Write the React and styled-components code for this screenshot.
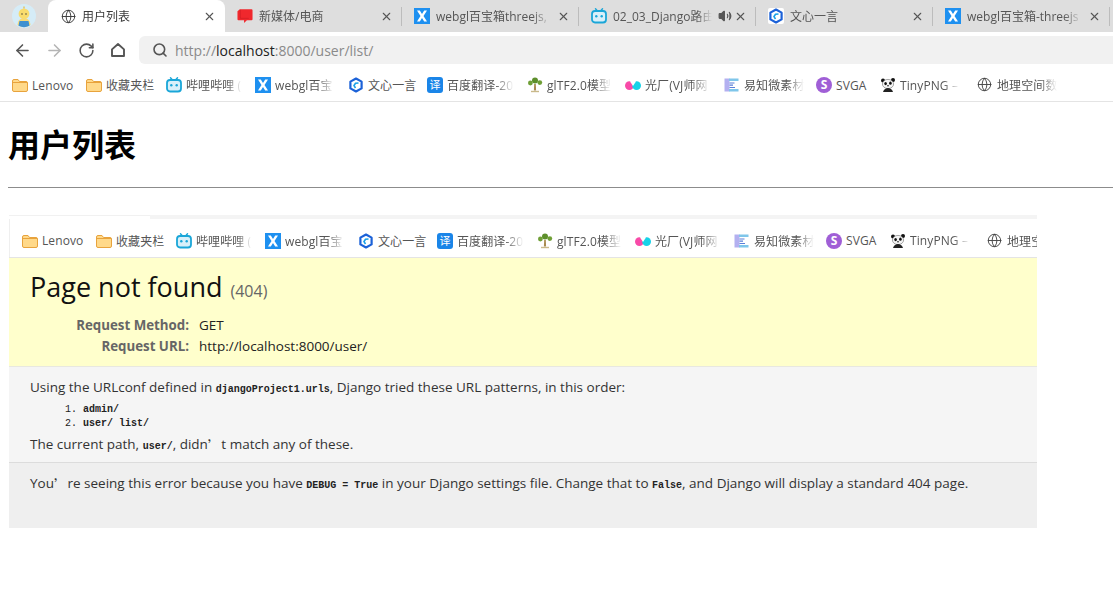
import React from "react";
import styled, { createGlobalStyle } from "styled-components";
import { ArrowLeft, ArrowRight, RotateCw, Search, X, Globe, Volume2 } from "lucide-react";

const GlobalStyle = createGlobalStyle`
  html, body {
    margin: 0;
    background: #fff;
    font-family: "Open Sans", "Noto Sans CJK SC", sans-serif;
    overflow: hidden;
  }
`;

const TabBar = styled.div`
  display: flex;
  height: 32px;
  background: #dedede;
`;

const AvatarSlot = styled.div`
  width: 48px;
  padding: 4px 0 0 12px;
  box-sizing: border-box;
`;

const Tab = styled.div`
  position: relative;
  box-sizing: border-box;
  width: 177px;
  padding: 0 9px 0 12px;
  display: flex;
  align-items: center;
  gap: 6px;
  font-size: 12px;
  color: ${(p) => (p.$active ? "#3a3a3a" : "#555")};
  background: ${(p) => (p.$active ? "#fff" : "transparent")};
  border-radius: 8px 8px 0 0;

  &::after {
    content: "";
    display: ${(p) => (p.$sep ? "block" : "none")};
    position: absolute;
    right: 0;
    top: 7px;
    height: 19px;
    width: 1px;
    background: #bcbcbc;
  }
`;

const TabIcon = styled.span`
  flex: none;
  width: 16px;
  height: 16px;
  display: flex;
  justify-content: center;
  align-items: center;
`;

const TabTitle = styled.span`
  flex: 1;
  min-width: 0;
  overflow: hidden;
  white-space: nowrap;
  mask-image: linear-gradient(to right, #000 84%, transparent 100%);
`;

const TabAction = styled.span`
  flex: none;
  display: flex;
  color: #555;
  margin-left: ${(p) => p.$gap || 0}px;
`;

const Toolbar = styled.div`
  display: flex;
  height: 32px;
  background: #fff;
  padding-top: 4px;
  box-sizing: border-box;
`;

const NavButtons = styled.div`
  width: 139px;
  flex: none;
  display: flex;
  align-items: center;
  padding-left: 6px;
  box-sizing: border-box;
`;

const NavButton = styled.span`
  width: 32px;
  display: flex;
  justify-content: center;
  color: ${(p) => (p.$off ? "#b5b5b5" : "#555")};
`;

const SearchIcon = styled.span`
  display: flex;
  color: #555;
`;

const AddressBar = styled.div`
  flex: 1;
  background: #f1f1f1;
  border-radius: 6px 0 0 6px;
  display: flex;
  align-items: center;
  gap: 7px;
  padding-left: 13px;
  font-size: 14px;
  color: #8a8a8a;
`;

const Host = styled.span`
  color: #222;
`;

const Bookmarks = styled.div`
  display: flex;
  align-items: center;
  box-sizing: border-box;
  height: ${(p) => p.$height}px;
  padding: 5px 0 0 ${(p) => p.$left}px;
  border-bottom: 1px solid #e4e4e4;
  background: #fff;
  box-shadow: ${(p) => (p.$framed ? "inset 1px 0 0 #efefef" : "none")};
  overflow: hidden;
  white-space: nowrap;
`;

const Bookmark = styled.div`
  flex: none;
  width: ${(p) => p.$w}px;
  display: flex;
  align-items: center;
  gap: 4px;
  font-size: 12px;
  letter-spacing: 0.1px;
  color: #555;
`;

const BookmarkIcon = styled.span`
  flex: none;
  width: 16px;
  height: 16px;
  display: flex;
  color: #444;
`;

const BookmarkLabel = styled.span`
  width: ${(p) => p.$w}px;
  overflow: hidden;
  mask-image: ${(p) => (p.$fade ? "linear-gradient(to right, #000 72%, transparent 100%)" : "none")};
`;

const Heading = styled.h1`
  margin: 0;
  padding: 19px 0 0 8px;
  font-family: "Noto Sans CJK SC", sans-serif;
  font-size: 32px;
  line-height: 44px;
  font-weight: 700;
  color: #000;
`;

const Rule = styled.hr`
  margin: 22px 0 27px 8px;
  border: 0;
  height: 1px;
  background: #8c8c8c;
`;

const Shot = styled.div`
  margin-left: 9px;
  width: 1028px;
  overflow: hidden;
`;

const ShotEdge = styled.div`
  height: 4px;
  background:
    linear-gradient(#f1f1f1, #f1f1f1) left top / 141px 1px no-repeat,
    linear-gradient(#f4f4f4, #f4f4f4) right top / calc(100% - 141px) 100% no-repeat;
`;

const ErrorHead = styled.div`
  box-sizing: border-box;
  height: 109px;
  padding: 9px 21px 0;
  background: #ffffcc;
  border-bottom: 1px solid #e8e8e0;
  color: #000;
`;

const ErrorTitle = styled.h2`
  margin: 0 0 4px;
  font-size: 27px;
  line-height: 40px;
  font-weight: 400;
  color: #111;
`;

const StatusCode = styled.span`
  font-size: 16px;
  color: #666;
  margin-left: 1px;
`;

const MetaTable = styled.div`
  display: grid;
  grid-template-columns: 180px auto;
  column-gap: 10px;
  justify-content: start;
  margin-left: -21px;
  font-size: 13.3px;
  line-height: 21px;
`;

const MetaKey = styled.span`
  text-align: right;
  font-weight: 700;
  color: #666;
`;

const MetaValue = styled.span`
  font-size: 13.5px;
  color: #222;
`;

const InfoBlock = styled.div`
  box-sizing: border-box;
  height: 96px;
  padding: 10px 21px 0;
  background: #f5f5f5;
  border-bottom: 1px solid #dcdcdc;
  font-size: 13.5px;
  color: #333;
`;

const ExplainBlock = styled.div`
  box-sizing: border-box;
  height: 65px;
  padding: 10px 21px 0;
  background: #efefef;
  font-size: 13.5px;
  color: #333;
`;

const Line = styled.p`
  margin: 0;
  line-height: 20px;
`;

const Code = styled.code`
  font-family: "Liberation Mono", monospace;
  font-size: 10px;
  font-weight: 700;
  color: #222;
`;

const Quote = styled.span`
  font-family: "Noto Sans CJK SC", sans-serif;
  vertical-align: -2px;
`;

const Patterns = styled.ol`
  margin: 3px 0 3px;
  padding-left: 53px;
  font-family: "Liberation Mono", monospace;
  font-size: 10px;
  font-weight: 700;
  line-height: 14px;
  color: #222;

  li::marker {
    font-weight: 400;
  }
`;

const Folder = () => (
  <svg width="16" height="16" viewBox="0 0 16 16">
    <path d="M.5 4a1.500 1.500 0 0 1 1.500-1.500h4l1.500 2H14A1.500 1.500 0 0 1 15.500 6v7a1.500 1.500 0 0 1-1.500 1.500H2A1.500 1.500 0 0 1 .5 13z" fill="#ffd98a" stroke="#e8a33d" />
    <path d="M1 5.500h14" stroke="#e8a33d" />
  </svg>
);

const Bilibili = () => (
  <svg width="16" height="16" viewBox="0 0 16 16">
    <path d="M4.500 .8 6.500 3M11.500 .8 9.500 3" stroke="#1aa6d8" strokeWidth="1.400" strokeLinecap="round" />
    <rect x="1" y="3" width="14" height="11.500" rx="3" fill="#d8f0fa" stroke="#1aa6d8" strokeWidth="1.800" />
    <circle cx="5.300" cy="8.200" r="1.200" fill="#1aa6d8" />
    <circle cx="10.700" cy="8.200" r="1.200" fill="#1aa6d8" />
  </svg>
);

const XLogo = () => (
  <svg width="16" height="16" viewBox="0 0 16 16">
    <rect width="16" height="16" fill="#1e90f0" />
    <path d="M3 2.500h2.800L8 6l2.200-3.500H13L9.500 8 13 13.500h-2.800L8 10l-2.200 3.500H3L6.500 8z" fill="#fff" />
  </svg>
);

const Wenxin = () => (
  <svg width="16" height="16" viewBox="0 0 16 16">
    <rect width="16" height="16" rx="2" fill="#fff" />
    <path d="M8 1.500 13.600 4.600v6.800L8 14.500 2.400 11.400V4.600z" fill="#fff" stroke="#1c62d8" strokeWidth="2.200" strokeLinejoin="round" />
    <path d="M10.500 6 7.500 6.300 6 8.600 7.500 11" fill="none" stroke="#18a0e8" strokeWidth="1.600" />
  </svg>
);

const Translate = styled.span`
  width: 16px;
  height: 16px;
  border-radius: 3px;
  background: #1a85e8;
  color: #fff;
  font-size: 11px;
  line-height: 16px;
  text-align: center;
`;

const Tree = () => (
  <svg width="16" height="16" viewBox="0 0 16 16">
    <path d="M7.200 7h1.600l.3 6.500H6.900z" fill="#a88a4f" />
    <path d="M4 14.500h8" stroke="#c9b98a" strokeWidth="1.400" />
    <circle cx="8" cy="3.400" r="3" fill="#5d8f2c" />
    <circle cx="3.400" cy="6" r="2.400" fill="#6f9f36" />
    <circle cx="12.800" cy="5.600" r="2.400" fill="#6f9f36" />
  </svg>
);

const Guangchang = () => (
  <svg width="16" height="16" viewBox="0 0 16 16">
    <circle cx="4.400" cy="8.600" r="4.400" fill="#f84aa8" />
    <circle cx="11.600" cy="8.600" r="4.400" fill="#16d2e8" />
    <path d="M5 4.600c2-1.600 4-1.600 6 0L8 9z" fill="#fff" />
  </svg>
);

const Yizhi = () => (
  <svg width="16" height="16" viewBox="0 0 16 16">
    <rect x=".5" y="1.500" width="5" height="13" fill="#b3b0f0" />
    <path d="M5 1.500h9.500v2.400H5zM5 12h9.500v2.500H5z" fill="#7fc6ea" />
    <path d="M5.500 6h5M5.500 8.200h3.500M5.500 10.500h5.500" stroke="#5b7fd8" strokeWidth="1.200" />
  </svg>
);

const Svga = styled.span`
  width: 16px;
  height: 16px;
  border-radius: 50%;
  background: #a05fd6;
  color: #fff;
  font-size: 12px;
  font-weight: 700;
  line-height: 16px;
  text-align: center;
`;

const Panda = () => (
  <svg width="16" height="16" viewBox="0 0 16 16">
    <circle cx="3" cy="3.600" r="2" fill="#111" />
    <circle cx="13" cy="3" r="2" fill="#111" />
    <ellipse cx="8" cy="7" rx="5.600" ry="4.600" fill="#f4f4f4" stroke="#555" strokeWidth=".5" />
    <ellipse cx="5.600" cy="6.600" rx="1.300" ry="1.600" fill="#111" />
    <ellipse cx="10.400" cy="6.200" rx="1.300" ry="1.600" fill="#111" />
    <circle cx="8" cy="8.800" r=".8" fill="#111" />
    <path d="M3 15c1-3 3-4 5-4s4 1 5 4z" fill="#222" />
  </svg>
);

const Speech = () => (
  <svg width="17" height="16" viewBox="0 0 17 16">
    <path d="M.5 3 3 .8h12.500a1 1 0 0 1 1 1v9.700a1 1 0 0 1-1 1h-5L7.500 15.500v-3H1.500a1 1 0 0 1-1-1z" fill="#f0282d" />
    <path d="M3.500 1.500v9h9" fill="none" stroke="#c81a20" strokeOpacity=".6" />
  </svg>
);

const HomeIcon = () => (
  <svg width="16" height="16" viewBox="0 0 16 16" fill="none" stroke="currentColor" strokeWidth="1.900" strokeLinejoin="round">
    <path d="M2 7.400 8 2l6 5.400V14H2z" />
  </svg>
);

const Avatar = () => (
  <svg width="24" height="24" viewBox="0 0 24 24">
    <circle cx="12" cy="12" r="12" fill="#d5ecf7" />
    <path d="M5.500 21c.5-5 3-7 6.500-7s6 2 6.500 7a12 12 0 0 1-13 0z" fill="#f7d978" />
    <circle cx="12" cy="9.800" r="5.400" fill="#f9dc6d" />
    <path d="M7.500 17h9l1 4.800a12 12 0 0 1-11 0z" fill="#3d8fd0" />
    <circle cx="10" cy="10" r=".7" fill="#333" />
    <circle cx="14" cy="10" r=".7" fill="#333" />
    <path d="M12 4.500V2.500" stroke="#e8b93f" strokeWidth="1.200" />
  </svg>
);

const tabs = [
  { title: "用户列表", icon: <Globe size={15} strokeWidth={1.5} />, active: true },
  { title: "新媒体/电商", icon: <Speech />, sep: true },
  { title: "webgl百宝箱threejs,", icon: <XLogo />, sep: true },
  { title: "02_03_Django路由", icon: <Bilibili />, sound: true, sep: true },
  { title: "文心一言", icon: <Wenxin />, sep: true },
  { title: "webgl百宝箱-threejs", icon: <XLogo />, sep: true },
];

const bookmarks = [
  { w: 74, lw: 42, label: "Lenovo", icon: <Folder /> },
  { w: 80, lw: 49, label: "收藏夹栏", icon: <Folder /> },
  { w: 89, lw: 56, label: "哔哩哔哩 (", icon: <Bilibili />, fade: true },
  { w: 93, lw: 59, label: "webgl百宝", icon: <XLogo />, fade: true },
  { w: 79, lw: 49, label: "文心一言", icon: <Wenxin /> },
  { w: 100, lw: 67, label: "百度翻译-20", icon: <Translate>译</Translate>, fade: true },
  { w: 98, lw: 65, label: "glTF2.0模型", icon: <Tree />, fade: true },
  { w: 99, lw: 65, label: "光厂(VJ师网", icon: <Guangchang />, fade: true },
  { w: 92, lw: 60, label: "易知微素材", icon: <Yizhi />, fade: true },
  { w: 64, lw: 33, label: "SVGA", icon: <Svga>S</Svga> },
  { w: 97, lw: 60, label: "TinyPNG –", icon: <Panda />, fade: true },
  { w: 100, lw: 60, label: "地理空间数", icon: <Globe size={15} strokeWidth={1.5} />, fade: true },
];

function BookmarkRow({ height, left, framed }) {
  return (
    <Bookmarks $height={height} $left={left} $framed={framed}>
      {bookmarks.map((b) => (
        <Bookmark key={b.label} $w={b.w}>
          <BookmarkIcon>{b.icon}</BookmarkIcon>
          <BookmarkLabel $w={b.lw} $fade={b.fade}>{b.label}</BookmarkLabel>
        </Bookmark>
      ))}
    </Bookmarks>
  );
}

export default function App() {
  return (
    <>
      <GlobalStyle />
      <TabBar>
        <AvatarSlot>
          <Avatar />
        </AvatarSlot>
        {tabs.map((t) => (
          <Tab key={t.title} $active={t.active} $sep={t.sep}>
            <TabIcon>{t.icon}</TabIcon>
            <TabTitle>{t.title}</TabTitle>
            {t.sound && (
              <TabAction>
                <Volume2 size={14} fill="#555" />
              </TabAction>
            )}
            <TabAction $gap={t.sound ? -4 : 0}>
              <X size={13} strokeWidth={2} />
            </TabAction>
          </Tab>
        ))}
      </TabBar>
      <Toolbar>
        <NavButtons>
          <NavButton><ArrowLeft size={19} strokeWidth={2} /></NavButton>
          <NavButton $off><ArrowRight size={19} strokeWidth={2} /></NavButton>
          <NavButton><RotateCw size={17} strokeWidth={2.2} /></NavButton>
          <NavButton><HomeIcon /></NavButton>
        </NavButtons>
        <AddressBar>
          <SearchIcon><Search size={16} strokeWidth={2.4} /></SearchIcon>
          <span>http://<Host>localhost</Host>:8000/user/list/</span>
        </AddressBar>
      </Toolbar>
      <BookmarkRow height={38} left={12} />
      <Heading>用户列表</Heading>
      <Rule />
      <Shot>
        <ShotEdge />
        <BookmarkRow height={39} left={13} framed />
        <ErrorHead>
          <ErrorTitle>Page not found <StatusCode>(404)</StatusCode></ErrorTitle>
          <MetaTable>
            <MetaKey>Request Method:</MetaKey>
            <MetaValue>GET</MetaValue>
            <MetaKey>Request URL:</MetaKey>
            <MetaValue>http://localhost:8000/user/</MetaValue>
          </MetaTable>
        </ErrorHead>
        <InfoBlock>
          <Line>
            Using the URLconf defined in <Code>djangoProject1.urls</Code>, Django tried these URL patterns, in this order:
          </Line>
          <Patterns>
            <li>admin/</li>
            <li>user/ list/</li>
          </Patterns>
          <Line>
            The current path, <Code>user/</Code>, didn<Quote>’</Quote>t match any of these.
          </Line>
        </InfoBlock>
        <ExplainBlock>
          <Line>
            You<Quote>’</Quote>re seeing this error because you have <Code>DEBUG = True</Code> in your Django settings file. Change that to <Code>False</Code>, and Django will display a standard 404 page.
          </Line>
        </ExplainBlock>
      </Shot>
    </>
  );
}
